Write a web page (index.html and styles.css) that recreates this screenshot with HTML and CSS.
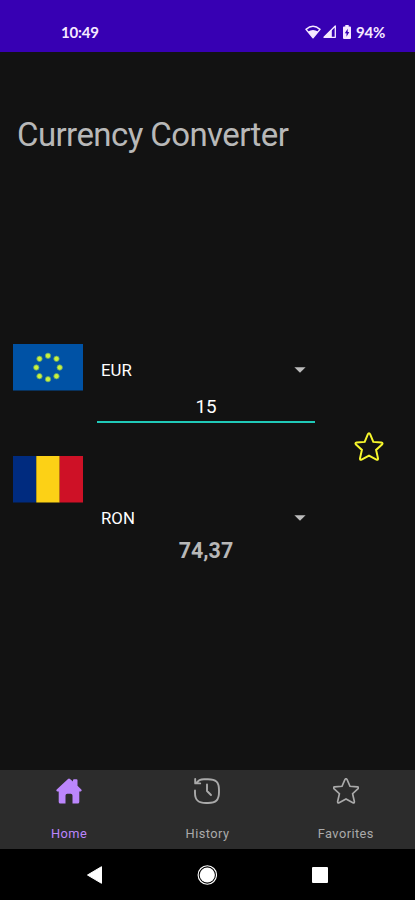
FILE: index.html
```html
<!DOCTYPE html>
<html lang="en">
<head>
<meta charset="utf-8">
<title>Currency Converter</title>
<link rel="stylesheet" href="styles.css">
</head>
<body>
<header class="status">
  <span class="clock">10:49</span>
  <div class="indicators">
    <svg class="wifi" width="16" height="14" viewBox="0 0 16 14"><path d="M1 4.4Q8-1.7 15 4.4L8 12.8Z" fill="none" stroke="#f6e9ff" stroke-width="1.4" stroke-linejoin="round"/><path d="M3 6.600Q8 3.400 13 6.600L8 12.8Z" fill="#f6e9ff"/></svg>
    <svg class="signal" width="13" height="13" viewBox="0 0 13 13"><path d="M12.3 1V12.3H1Z" fill="none" stroke="#f6e9ff" stroke-width="1.3" stroke-linejoin="round"/><path d="M8.8 4.3V12.3H1Z" fill="#f6e9ff"/></svg>
    <svg class="battery" width="8" height="14" viewBox="0 0 8 14"><path d="M2.3 0h3.4v1.5H7a1 1 0 0 1 1 1V13a1 1 0 0 1-1 1H1a1 1 0 0 1-1-1V2.500a1 1 0 0 1 1-1h1.300z" fill="#f6e9ff"/><path d="M4.700 3.700L1.800 8.200h1.700v3.500l2.800-4.600H4.700z" fill="#3700b3"/></svg>
    <span class="percent">94%</span>
  </div>
</header>
<main class="screen">
  <h1 class="title">Currency Converter</h1>
  <section class="converter">
    <div class="flags">
      <svg width="70" height="47" viewBox="0 0 70 47"><rect width="70" height="46.500" fill="#0052a5"/><g fill="#c9f23c" stroke="#5b9a72" stroke-width=".8"><circle cx="35" cy="11.800" r="2.700"/><circle cx="43.500" cy="14.800" r="2.700"/><circle cx="46.700" cy="23.500" r="2.700"/><circle cx="43.500" cy="32.200" r="2.700"/><circle cx="35" cy="35.200" r="2.700"/><circle cx="26.500" cy="32.200" r="2.700"/><circle cx="23.300" cy="23.500" r="2.700"/><circle cx="26.500" cy="14.800" r="2.700"/></g></svg>
      <svg width="70" height="47" viewBox="0 0 70 47"><path d="M0 0h23.300v46.500H0z" fill="#002b7f"/><path d="M23.300 0h23.400v46.500H23.300z" fill="#fcd116"/><path d="M46.700 0H70v46.500H46.700z" fill="#ce1126"/></svg>
    </div>
    <div class="fields">
      <div class="select"><span>EUR</span><svg width="12" height="6" viewBox="0 0 12 6"><path d="M.4 .2h11.200L6 5.700z" fill="#bcbcbc"/></svg></div>
      <div class="amount">15</div>
      <div class="select target"><span>RON</span><svg width="12" height="6" viewBox="0 0 12 6"><path d="M.4 .2h11.200L6 5.700z" fill="#bcbcbc"/></svg></div>
      <div class="result">74,37</div>
    </div>
    <svg class="favorite" width="30" height="30" viewBox="0 0 30 30"><path d="M15 1.200Q15.700 1.200 16.200 2.300L19.300 9.900 27.300 10.600Q29.400 11 28 12.500L22.100 17.900 24 26.300Q24.200 28.400 22.400 27.600L15 23.600 7.600 27.600Q5.800 28.400 6 26.300L7.900 17.900 2 12.500Q.6 11 2.700 10.600L10.700 9.900 13.800 2.300Q14.300 1.200 15 1.200Z" fill="none" stroke="#f6f62c" stroke-width="2"/></svg>
  </section>
</main>
<nav class="tabs">
  <div class="tab active">
    <svg width="26" height="26" viewBox="0 0 26 26"><path d="M12 .9Q13 0 14 .9L17 3.600V2.200Q17 1.300 18 1.300H20.500Q21.500 1.300 21.500 2.200V7.700L25.300 11.500Q26.300 13 24.700 13.500H23.300V24Q23.300 25.600 21.700 25.600H16.500V17.500Q16.500 15.700 14.700 15.700H11.300Q9.500 15.700 9.500 17.500V25.600H4.300Q2.700 25.600 2.700 24V13.500H1.300Q-.3 13 .7 11.500Z" fill="#bb86fc"/></svg>
    <span>Home</span>
  </div>
  <div class="tab">
    <svg width="26" height="26" viewBox="0 0 26 26"><path d="M1 12.500V15C1 22 4 25 12 25H14C22 25 25 22 25 14V12C25 4 22 1.200 14 1.200H10C6.500 1.200 4 2.500 2.500 5M1.200 1V5.400H6.200M13 6.500V13L17 17" fill="none" stroke="#aaa" stroke-width="1.900" stroke-linecap="round" stroke-linejoin="round"/></svg>
    <span>History</span>
  </div>
  <div class="tab">
    <svg width="26" height="26" viewBox="1 1 28 28"><path d="M15 1.800Q15.700 1.800 16.200 2.700L19.300 9.900 27.300 10.600Q29.400 11 28 12.500L22.100 17.900 24 26.300Q24.200 28.400 22.400 27.600L15 23.600 7.600 27.600Q5.800 28.400 6 26.300L7.900 17.900 2 12.500Q.6 11 2.700 10.600L10.700 9.900 13.800 2.700Q14.300 1.800 15 1.800Z" fill="none" stroke="#aaa" stroke-width="1.800"/></svg>
    <span>Favorites</span>
  </div>
</nav>
<footer class="system">
  <div><svg width="16" height="18" viewBox="0 0 16 18"><path d="M.5 9L14.500 .7V17.300Z" fill="#fff" stroke="#fff" stroke-linejoin="round"/></svg></div>
  <div><svg width="20" height="20" viewBox="0 0 20 20"><circle cx="10.300" cy="10" r="9.200" fill="none" stroke="#fff" stroke-width="1.100"/><circle cx="10.300" cy="10" r="7.600" fill="#fff"/></svg></div>
  <div><svg width="16" height="16" viewBox="0 0 16 16"><rect width="16" height="16" rx="1" fill="#fff"/></svg></div>
</footer>
</body>
</html>
```
FILE: styles.css
```css
* { box-sizing: border-box; }
body {
  margin: 0;
  width: 415px;
  height: 900px;
  display: flex;
  flex-direction: column;
  overflow: hidden;
  background: #121212;
  color: #fff;
  font-family: Roboto, sans-serif;
}
svg { display: block; flex: none; }
.status {
  height: 52px;
  padding: 11px 30px 0 61px;
  display: flex;
  justify-content: space-between;
  align-items: center;
  background: #3700b3;
  color: #f6e9ff;
  font: 700 15px/20px Lato, sans-serif;
}
.clock, .percent { letter-spacing: -.2px; }
.indicators { display: flex; align-items: center; }
.signal { margin-left: 2px; }
.battery { margin: 0 5px 0 7px; }
.screen { flex: 1; }
.title {
  margin: 63px 0 0 17px;
  font-size: 33px;
  line-height: 40px;
  letter-spacing: -.58px;
  font-weight: 400;
  color: #b8b8b8;
}
.converter {
  margin-top: 189px;
  padding-left: 13px;
  display: flex;
  align-items: flex-start;
}
.flags { display: grid; gap: 65px; }
.fields { width: 218px; margin-left: 14px; }
.select {
  height: 52px;
  padding: 0 9px 0 4px;
  display: flex;
  align-items: center;
  justify-content: space-between;
  font-size: 16.800px;
}
.amount {
  height: 27px;
  border-bottom: 2px solid #20c9b8;
  font-size: 18.800px;
  line-height: 22px;
  text-align: center;
}
.target { margin-top: 69px; }
.result {
  font-size: 21.400px;
  line-height: 24px;
  margin-top: -5px;
  font-weight: 700;
  color: #b8b8b8;
  text-align: center;
}
.favorite { margin: 88px 0 0 39px; }
.tabs {
  height: 79px;
  display: grid;
  grid-template-columns: repeat(3, 1fr);
  background: #2c2c2c;
}
.tab {
  display: flex;
  flex-direction: column;
  align-items: center;
  padding-top: 8px;
  color: #aaa;
  font-size: 12.800px;
  line-height: 16px;
  letter-spacing: .45px;
}
.tab span { margin-top: 22px; }
.active { color: #bb86fc; }
.system {
  height: 51px;
  padding: 0 39px;
  display: grid;
  grid-template-columns: repeat(3, 1fr);
  align-items: center;
  justify-items: center;
  background: #000;
}
```
